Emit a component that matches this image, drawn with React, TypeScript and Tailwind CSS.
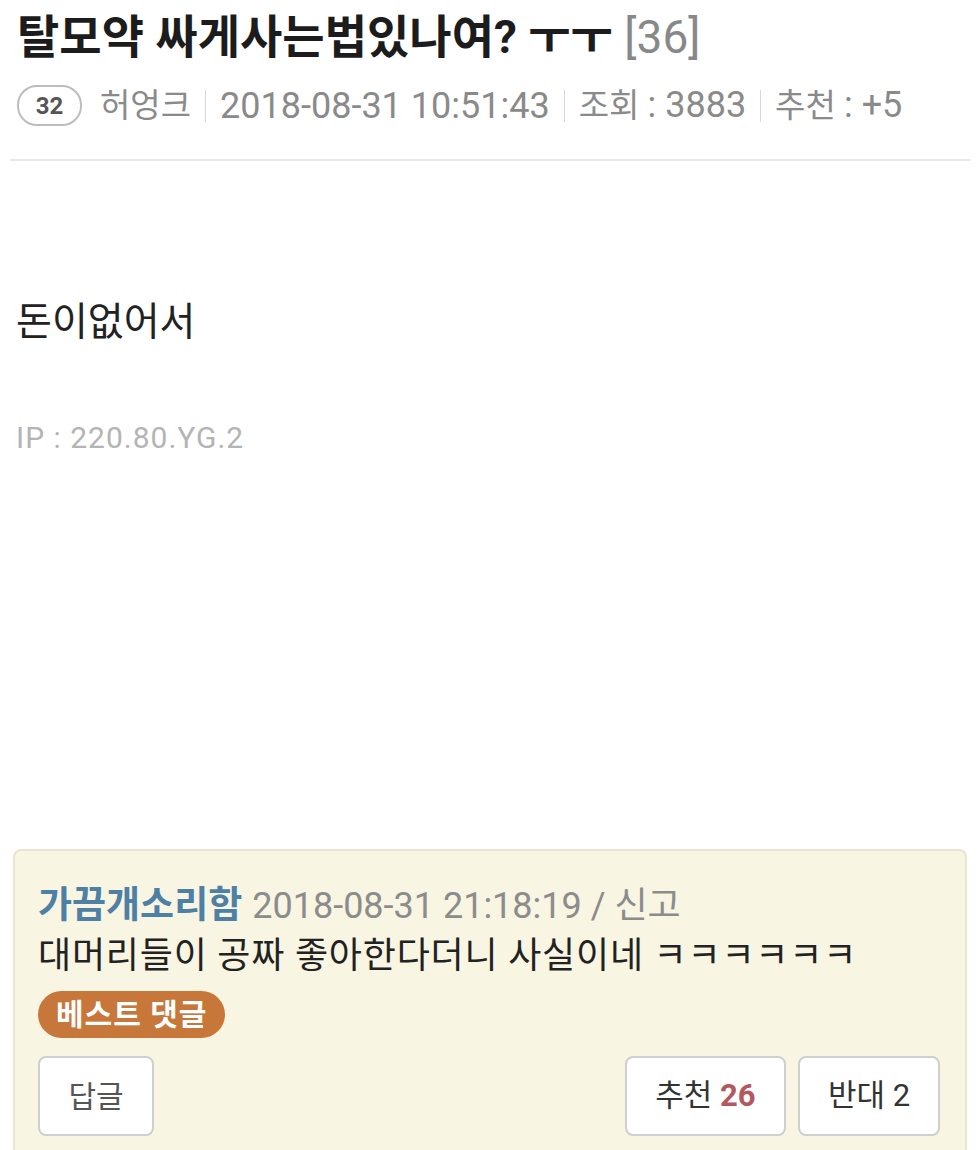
const font = '[font-family:Roboto,"Noto_Sans_CJK_KR",sans-serif]';

function Sep() {
  return <span className="mx-[14px] h-[32px] w-px bg-[#d8d8d8]" />;
}

export default function App() {
  return (
    <div className={`min-h-[1150px] w-[980px] overflow-hidden bg-white ${font}`}>
      {/* header */}
      <div className="px-[17px] pt-[10px]">
        <h1 className="text-[46px] leading-[54px] font-bold text-[#1c1c1c]">
          탈모약 싸게사는법있나여? ㅜㅜ <span className="font-normal text-[#888]">[36]</span>
        </h1>
        <div className="mt-[20px] flex items-center text-[33px] leading-[42px] text-[#8a8a8a]">
          <span className="mr-[18px] flex h-[41px] w-[65px] items-center justify-center rounded-[20px] border-2 border-[#bdbdbd] text-[24px] font-bold text-[#555]">
            32
          </span>
          <span>허엉크</span>
          <Sep />
          <span className="text-[36px]">2018-08-31 10:51:43</span>
          <Sep />
          <span>
            조회 <span className="text-[36px]">: 3883</span>
          </span>
          <Sep />
          <span>
            추천 <span className="text-[36px]">: +5</span>
          </span>
        </div>
      </div>
      <div className="mx-[10px] mt-[32px] h-[2px] bg-[#e8e8e8]" />

      {/* body */}
      <div className="px-[16px] pt-[136px]">
        <p className="text-[39px] leading-[50px] text-[#222]">돈이없어서</p>
        <p className="mt-[72px] text-[30px] leading-[38px] tracking-[1px] text-[#b4b4b4]">IP : 220.80.YG.2</p>
      </div>

      {/* comment */}
      <div className="mx-[13px] mt-[392px] rounded-t-[8px] border-2 border-b-0 border-[#e9e5cf] bg-[#f8f5e3] px-[23px] pt-[32px] pb-[20px]">
        <div className="flex items-baseline leading-[46px]">
          <span className="text-[37px] font-bold text-[#4e7fa4]">가끔개소리함</span>
          <span className="ml-[10px] text-[36px] text-[#8c8c8c]">2018-08-31 21:18:19 / 신고</span>
        </div>
        <p className="mt-[4px] text-[36px] leading-[46px] tracking-[0.8px] text-[#222]">
          대머리들이 공짜 좋아한다더니 사실이네 ㅋㅋㅋㅋㅋㅋ
        </p>
        <span className="mt-[12px] inline-flex h-[47px] items-center rounded-full bg-[#c7773a] px-[18px] text-[30px] font-bold tracking-[1px] text-white">
          베스트 댓글
        </span>
        <div className="mt-[18px] flex items-center">
          <button className="h-[80px] w-[116px] rounded-[8px] border-2 border-[#cfcfcf] bg-white text-[30px] text-[#555]">
            답글
          </button>
          <div className="ml-auto flex gap-[12px] pr-[2px]">
            <button className="h-[80px] w-[161px] rounded-[8px] border-2 border-[#cfcfcf] bg-white text-[31px] text-[#333]">
              추천 <span className="font-bold text-[#b4585f]">26</span>
            </button>
            <button className="h-[80px] w-[142px] rounded-[8px] border-2 border-[#cfcfcf] bg-white text-[31px] text-[#333]">
              반대 2
            </button>
          </div>
        </div>
      </div>
    </div>
  );
}
